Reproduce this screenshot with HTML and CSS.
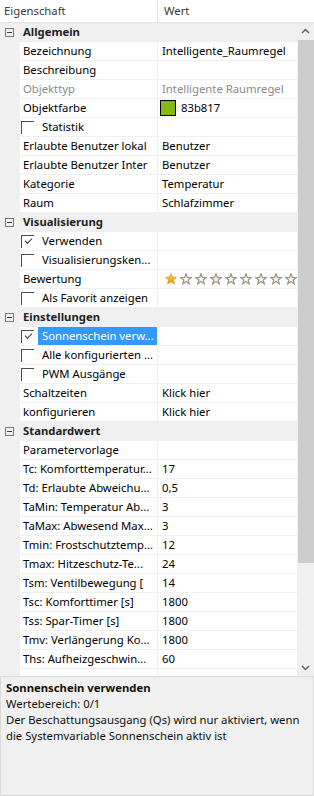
FILE: index.html
```html
<!DOCTYPE html>
<html lang="de">
<head>
<meta charset="utf-8">
<title>Eigenschaften</title>
<link rel="stylesheet" href="styles.css">
</head>
<body>
<div class="app">
  <div class="header">
    <div class="hcell hname">Eigenschaft</div>
    <div class="hcell hval">Wert</div>
  </div>
  <div class="main">
    <div class="list">
      <div class="group"><span class="tog"></span><span class="gtitle">Allgemein</span></div>
      <div class="row"><span class="mar"></span><span class="name">Bezeichnung</span><span class="val">Intelligente_Raumregel</span></div>
      <div class="row"><span class="mar"></span><span class="name">Beschreibung</span><span class="val"></span></div>
      <div class="row dis"><span class="mar"></span><span class="name">Objekttyp</span><span class="val">Intelligente Raumregel</span></div>
      <div class="row"><span class="mar"></span><span class="name">Objektfarbe</span><span class="val"><span class="swatch"></span>83b817</span></div>
      <div class="row"><span class="mar"></span><span class="name chk"><span class="box"></span><span class="lbl">Statistik</span></span><span class="val"></span></div>
      <div class="row"><span class="mar"></span><span class="name">Erlaubte Benutzer lokal</span><span class="val">Benutzer</span></div>
      <div class="row"><span class="mar"></span><span class="name">Erlaubte Benutzer Inter</span><span class="val">Benutzer</span></div>
      <div class="row"><span class="mar"></span><span class="name">Kategorie</span><span class="val">Temperatur</span></div>
      <div class="row"><span class="mar"></span><span class="name">Raum</span><span class="val">Schlafzimmer</span></div>

      <div class="group"><span class="tog"></span><span class="gtitle">Visualisierung</span></div>
      <div class="row"><span class="mar"></span><span class="name chk"><span class="box checked"></span><span class="lbl">Verwenden</span></span><span class="val"></span></div>
      <div class="row"><span class="mar"></span><span class="name chk"><span class="box"></span><span class="lbl">Visualisierungsken...</span></span><span class="val"></span></div>
      <div class="row"><span class="mar"></span><span class="name">Bewertung</span><span class="val stars">
        <svg class="star" viewBox="0 0 12 12"><defs><linearGradient id="gold" x1="0" y1="0" x2="0" y2="1"><stop offset="0" stop-color="#ffd44a"/><stop offset="1" stop-color="#e99a00"/></linearGradient></defs><polygon points="6,0.5 7.5,4.3 11.5,4.4 8.4,6.9 9.5,11 6,8.7 2.5,11 3.6,6.9 0.5,4.4 4.5,4.3" fill="url(#gold)" stroke="#d08a00" stroke-width="0.6"/></svg>
        <svg class="star" viewBox="0 0 12 12"><polygon points="6,0.8 7.4,4.5 11.3,4.6 8.2,7 9.3,10.9 6,8.6 2.7,10.9 3.8,7 0.7,4.6 4.6,4.5" fill="#f7f5f0" stroke="#9a9283" stroke-width="1.2"/></svg>
        <svg class="star" viewBox="0 0 12 12"><polygon points="6,0.8 7.4,4.5 11.3,4.6 8.2,7 9.3,10.9 6,8.6 2.7,10.9 3.8,7 0.7,4.6 4.6,4.5" fill="#f7f5f0" stroke="#9a9283" stroke-width="1.2"/></svg>
        <svg class="star" viewBox="0 0 12 12"><polygon points="6,0.8 7.4,4.5 11.3,4.6 8.2,7 9.3,10.9 6,8.6 2.7,10.9 3.8,7 0.7,4.6 4.6,4.5" fill="#f7f5f0" stroke="#9a9283" stroke-width="1.2"/></svg>
        <svg class="star" viewBox="0 0 12 12"><polygon points="6,0.8 7.4,4.5 11.3,4.6 8.2,7 9.3,10.9 6,8.6 2.7,10.9 3.8,7 0.7,4.6 4.6,4.5" fill="#f7f5f0" stroke="#9a9283" stroke-width="1.2"/></svg>
        <svg class="star" viewBox="0 0 12 12"><polygon points="6,0.8 7.4,4.5 11.3,4.6 8.2,7 9.3,10.9 6,8.6 2.7,10.9 3.8,7 0.7,4.6 4.6,4.5" fill="#f7f5f0" stroke="#9a9283" stroke-width="1.2"/></svg>
        <svg class="star" viewBox="0 0 12 12"><polygon points="6,0.8 7.4,4.5 11.3,4.6 8.2,7 9.3,10.9 6,8.6 2.7,10.9 3.8,7 0.7,4.6 4.6,4.5" fill="#f7f5f0" stroke="#9a9283" stroke-width="1.2"/></svg>
        <svg class="star" viewBox="0 0 12 12"><polygon points="6,0.8 7.4,4.5 11.3,4.6 8.2,7 9.3,10.9 6,8.6 2.7,10.9 3.8,7 0.7,4.6 4.6,4.5" fill="#f7f5f0" stroke="#9a9283" stroke-width="1.2"/></svg>
        <svg class="star" viewBox="0 0 12 12"><polygon points="6,0.8 7.4,4.5 11.3,4.6 8.2,7 9.3,10.9 6,8.6 2.7,10.9 3.8,7 0.7,4.6 4.6,4.5" fill="#f7f5f0" stroke="#9a9283" stroke-width="1.2"/></svg>
      </span></div>
      <div class="row"><span class="mar"></span><span class="name chk"><span class="box"></span><span class="lbl">Als Favorit anzeigen</span></span><span class="val"></span></div>

      <div class="group"><span class="tog"></span><span class="gtitle">Einstellungen</span></div>
      <div class="row"><span class="mar"></span><span class="name chk"><span class="box checked"></span><span class="lbl sel">Sonnenschein verw...</span></span><span class="val"></span></div>
      <div class="row"><span class="mar"></span><span class="name chk"><span class="box"></span><span class="lbl">Alle konfigurierten ...</span></span><span class="val"></span></div>
      <div class="row"><span class="mar"></span><span class="name chk"><span class="box"></span><span class="lbl">PWM Ausgänge</span></span><span class="val"></span></div>
      <div class="row"><span class="mar"></span><span class="name">Schaltzeiten</span><span class="val">Klick hier</span></div>
      <div class="row"><span class="mar"></span><span class="name">konfigurieren</span><span class="val">Klick hier</span></div>

      <div class="group"><span class="tog"></span><span class="gtitle">Standardwert</span></div>
      <div class="row"><span class="mar"></span><span class="name">Parametervorlage</span><span class="val"></span></div>
      <div class="row"><span class="mar"></span><span class="name">Tc: Komforttemperatur...</span><span class="val">17</span></div>
      <div class="row"><span class="mar"></span><span class="name">Td: Erlaubte Abweichu...</span><span class="val">0,5</span></div>
      <div class="row"><span class="mar"></span><span class="name">TaMin: Temperatur Ab...</span><span class="val">3</span></div>
      <div class="row"><span class="mar"></span><span class="name">TaMax: Abwesend Max...</span><span class="val">3</span></div>
      <div class="row"><span class="mar"></span><span class="name">Tmin: Frostschutztemp...</span><span class="val">12</span></div>
      <div class="row"><span class="mar"></span><span class="name">Tmax: Hitzeschutz-Te...</span><span class="val">24</span></div>
      <div class="row"><span class="mar"></span><span class="name">Tsm: Ventilbewegung [</span><span class="val">14</span></div>
      <div class="row"><span class="mar"></span><span class="name">Tsc: Komforttimer [s]</span><span class="val">1800</span></div>
      <div class="row"><span class="mar"></span><span class="name">Tss: Spar-Timer [s]</span><span class="val">1800</span></div>
      <div class="row"><span class="mar"></span><span class="name">Tmv: Verlängerung Ko...</span><span class="val">1800</span></div>
      <div class="row"><span class="mar"></span><span class="name">Ths: Aufheizgeschwin...</span><span class="val">60</span></div>
      <div class="row"><span class="mar"></span><span class="name"></span><span class="val"></span></div>
    </div>
    <div class="scrollbar">
      <div class="sbtn"><svg viewBox="0 0 17 17" class="arrow"><polyline points="5,10 8.5,6.5 12,10" fill="none" stroke="#606060" stroke-width="1.5"/></svg></div>
      <div class="thumb"></div>
      <div class="track"></div>
      <div class="sbtn"><svg viewBox="0 0 17 17" class="arrow"><polyline points="5,7 8.5,10.5 12,7" fill="none" stroke="#606060" stroke-width="1.5"/></svg></div>
    </div>
  </div>
  <div class="desc">
    <div class="dtitle">Sonnenschein verwenden</div>
    <div>Wertebereich: 0/1</div>
    <div>Der Beschattungsausgang (Qs) wird nur aktiviert, wenn die Systemvariable Sonnenschein aktiv ist</div>
  </div>
</div>
</body>
</html>
```
FILE: styles.css
```css
* { box-sizing: border-box; }
html, body { margin: 0; padding: 0; }
body {
  width: 314px;
  height: 796px;
  overflow: hidden;
  background: #ffffff;
  font-family: "Noto Sans", "Segoe UI", sans-serif;
  font-size: 11.3px;
  color: #000;
}
.app { width: 314px; height: 796px; display: flex; flex-direction: column; }

.header {
  height: 23px;
  display: flex;
  background: #fff;
  border-bottom: 1px solid #e5e5e5;
}
.hcell { line-height: 22px; color: #3a3a3a; white-space: nowrap; }
.hname { width: 158px; padding-left: 4px; border-right: 1px solid #e5e5e5; }
.hval { flex: 1; padding-left: 6px; }

.main { height: 653px; display: flex; }
.list {
  width: 297px;
  height: 653px;
  overflow: hidden;
  background: #f0f0f0;
  display: flex;
  flex-direction: column;
  gap: 1px;
}
.group {
  height: 18px;
  flex: none;
  display: flex;
  align-items: center;
  background: #f0f0f0;
}
.tog {
  width: 9px;
  height: 9px;
  margin-left: 5px;
  border: 1px solid #7a7a7a;
  position: relative;
  flex: none;
}
.tog::after {
  content: "";
  position: absolute;
  left: 1px; right: 1px; top: 3px;
  height: 1px;
  background: #3a3a3a;
}
.gtitle {
  margin-left: 9px;
  font-weight: bold;
  color: #222;
  line-height: 18px;
}
.row {
  height: 18px;
  flex: none;
  display: flex;
  line-height: 18px;
}
.mar { width: 20px; flex: none; }
.name {
  width: 137px;
  flex: none;
  background: #fff;
  padding-left: 3px;
  white-space: nowrap;
  overflow: hidden;
  display: flex;
  align-items: center;
}
.val {
  width: 139px;
  margin-left: 1px;
  flex: none;
  background: #fff;
  padding-left: 4px;
  white-space: nowrap;
  overflow: hidden;
  display: flex;
  align-items: center;
}
.dis .name, .dis .val { color: #8a8a8a; }
.chk { padding-left: 1px; }
.box {
  width: 13px;
  height: 13px;
  flex: none;
  border-top: 1px solid #4a4a4a;
  border-left: 1px solid #4a4a4a;
  margin-right: 4px;
  position: relative;
}
.box.checked::after {
  content: "";
  position: absolute;
  left: 3px;
  top: 2px;
  width: 6px;
  height: 3px;
  border-left: 1px solid #333;
  border-bottom: 1px solid #333;
  transform: rotate(-45deg);
}
.lbl {
  padding-left: 4px;
  line-height: 18px;
  white-space: nowrap;
}
.sel {
  background: #3399ff;
  color: #fff;
  align-self: stretch;
  flex: 1;
}
.swatch {
  width: 16px;
  height: 16px;
  border: 1px solid #000;
  background: #83b817;
  margin-left: -2px;
  margin-right: 5px;
  flex: none;
}
.stars { padding-left: 7px; gap: 3px; }
.star { width: 12px; height: 12px; flex: none; }

.scrollbar {
  width: 17px;
  height: 653px;
  background: #f0f0f0;
  display: flex;
  flex-direction: column;
}
.sbtn { height: 17px; flex: none; display: flex; }
.arrow { width: 17px; height: 17px; }
.thumb { height: 523px; margin: 0 0 0 1px; background: #cdcdcd; flex: none; }
.track { flex: 1; }

.desc {
  height: 120px;
  border: 1px solid #dadada;
  background: #f0f0f0;
  padding: 3px 5px;
  line-height: 16px;
  color: #111;
}
.dtitle { font-weight: bold; }
```
